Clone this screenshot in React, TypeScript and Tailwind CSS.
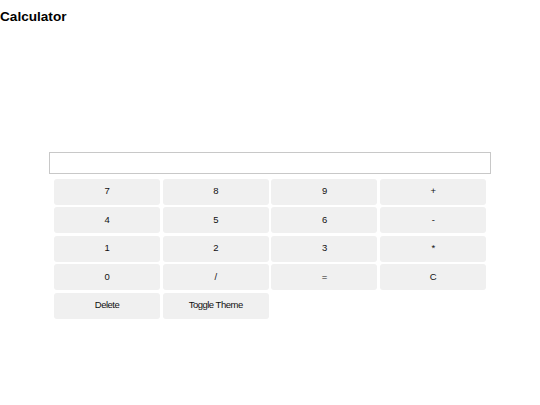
import React, { useState } from "react"

const KEYS = ["7", "8", "9", "+", "4", "5", "6", "-", "1", "2", "3", "*", "0", "/", "=", "C"]

export default function App() {
  const [value, setValue] = useState("")
  const [dark, setDark] = useState(false)

  const press = (k: string) => {
    if (k === "C") setValue("")
    else if (k === "=") {
      try {
        // eslint-disable-next-line no-new-func
        setValue(String(Function(`"use strict";return (${value})`)()))
      } catch {
        setValue("Error")
      }
    } else setValue((v) => v + k)
  }

  const btn =
    "h-[26px] rounded-[3px] bg-[#f0f0f0] text-[9.5px] tracking-[-0.5px] text-[#111] hover:bg-[#e4e4e4]"

  return (
    <div
      className={dark ? "min-h-[405px] w-[540px] bg-[#222] text-white" : "min-h-[405px] w-[540px] bg-white text-black"}
      style={{ fontFamily: '"Liberation Sans", Arial, sans-serif' }}
    >
      <h1 className="pt-[9px] text-[13.6px] font-bold leading-[15px]">Calculator</h1>
      <div className="mx-auto mt-[128px] w-[442px]">
        <input
          value={value}
          readOnly
          className="block h-[22px] w-full border border-[#c8c8c8] px-1 text-[12px] outline-none"
        />
        <div className="mt-[4.5px] grid grid-cols-4 gap-x-[2.67px] gap-y-[2.5px] px-[5px]">
          {KEYS.map((k) => (
            <button key={k} type="button" onClick={() => press(k)} className={btn}>
              {k}
            </button>
          ))}
          <button type="button" onClick={() => setValue((v) => v.slice(0, -1))} className={btn}>
            Delete
          </button>
          <button type="button" onClick={() => setDark((d) => !d)} className={btn}>
            Toggle Theme
          </button>
        </div>
      </div>
    </div>
  )
}
